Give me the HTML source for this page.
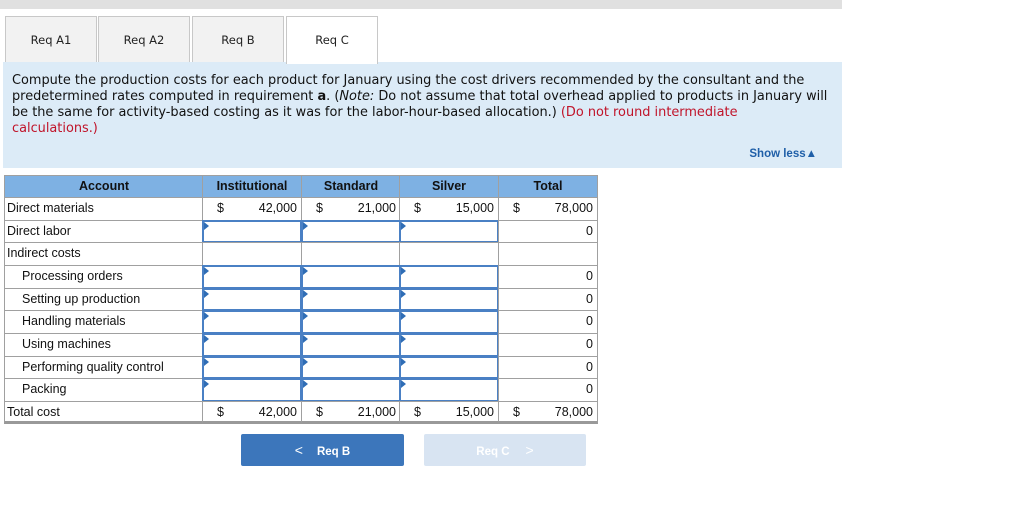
<!DOCTYPE html>
<html><head><style>
*{margin:0;padding:0;box-sizing:border-box}
body{width:1024px;height:523px;background:#fff;position:relative;overflow:hidden;font-family:"Liberation Sans",Arial,sans-serif}
.a{position:absolute}
.tab{position:absolute;top:16px;height:47px;background:#f2f2f2;border:1px solid #c8c8c8;border-bottom:none;font-family:"DejaVu Sans",Verdana,sans-serif;font-size:11.5px;text-align:center;line-height:46px;color:#222}
.prompt{position:absolute;left:3px;top:62px;width:839px;height:106px;background:#dcebf7;font-family:"DejaVu Sans",Verdana,sans-serif;font-size:12.9px;line-height:16px;color:#111;padding:11px 9px;white-space:nowrap}
.red{color:#c0142a}
.c{position:absolute;height:23px;border:1px solid #a0a0a0;font-size:12.5px;line-height:21px;color:#111;background:#fff}
.h{background:#7eb1e3;font-weight:bold;text-align:center}
.in{border:2px solid #4a80c4}
.in::before{content:"";position:absolute;left:0;top:0;border-left:5px solid #2f6db5;border-top:4px solid transparent;border-bottom:4px solid transparent}
.d{position:absolute;left:14px}
.v{position:absolute;right:4px}
</style></head><body>
<div class="a" style="left:0;top:0;width:842px;height:9px;background:#e0e0e0"></div>
<div class="tab" style="left:5px;width:92px">Req A1</div>
<div class="tab" style="left:98px;width:92px">Req A2</div>
<div class="tab" style="left:192px;width:92px">Req B</div>
<div class="tab" style="left:286px;width:92px;background:#fff;height:48px;z-index:2">Req C</div>
<div class="prompt">Compute the production costs for each product for January using the cost drivers recommended by the consultant and the<br>predetermined rates computed in requirement <b>a</b>. (<i>Note:</i> Do not assume that total overhead applied to products in January will<br>be the same for activity-based costing as it was for the labor-hour-based allocation.) <span class="red">(Do not round intermediate<br>calculations.)</span>
<div class="a" style="right:25px;top:84px;font-family:'Liberation Sans',sans-serif;font-weight:bold;font-size:11.5px;color:#1f5fa8">Show less▲</div></div>
<div id="t"></div>
<div class="a" style="left:241px;top:434px;width:163px;height:32px;background:#3c76bb;border-radius:2px;color:#fff;font-weight:bold;font-size:11.5px;line-height:32px;text-align:center"><span style="font-weight:normal;font-size:14px;margin-right:14px">&lt;</span>Req B</div>
<div class="a" style="left:424px;top:434px;width:162px;height:32px;background:#d8e4f2;border-radius:2px;color:#fff;font-weight:bold;font-size:11.5px;line-height:32px;text-align:center">Req C<span style="font-weight:normal;font-size:14px;margin-left:16px">&gt;</span></div>
<script>
var cols=[[4,199],[202,99],[301,99],[399,99],[498,99]];
var ys=[175,197,220,242,265,288,310,333,356,378,401];
var lab=["Account","Direct materials","Direct labor","Indirect costs","Processing orders","Setting up production","Handling materials","Using machines","Performing quality control","Packing","Total cost"];
var vals=[["Institutional","Standard","Silver","Total"],["42,000","21,000","15,000","78,000"]];
var h="";
for(var r=0;r<11;r++){var y=ys[r],hh=(r==10?23:ys[r+1]-y+1);
for(var c=0;c<5;c++){var x=cols[c][0],w=cols[c][1]+1;
var cls="c",txt="";
if(r==0){cls+=" h";txt=c==0?"Account":vals[0][c-1];}
else if(c==0){txt='<span style="padding-left:'+((r>=4&&r<=9)?17:2)+'px">'+lab[r]+'</span>';}
else if(r==1||r==10){txt='<span class="d">$</span><span class="v">'+vals[1][c-1]+'</span>';}
else if(c==4){if(r!=3)txt='<span class="v">0</span>';}
else if(r!=3){cls+=" in";}
var st="left:"+x+"px;top:"+y+"px;width:"+w+"px;height:"+hh+"px;";
if(r==10)st+="border-bottom:3px solid #999;";
h+='<div class="'+cls+'" style="'+st+'">'+txt+'</div>';}}
document.getElementById("t").innerHTML=h;
</script>
</body></html>
